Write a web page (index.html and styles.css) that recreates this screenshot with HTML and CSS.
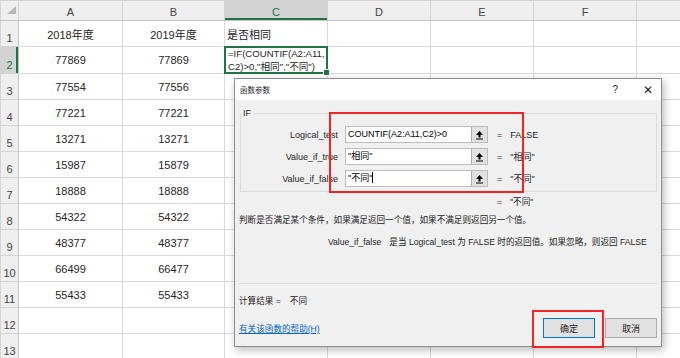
FILE: index.html
```html
<!DOCTYPE html>
<html>
<head>
    <meta charset="utf-8" />
    <title>函数参数</title>
    <link rel="stylesheet" href="styles.css">
</head>
<body>
    <table class="sheet">
        <colgroup>
            <col class="w-rn"><col class="w-a"><col class="w-b"><col class="w-c"><col class="w-d"><col class="w-e"><col class="w-f"><col class="w-g">
        </colgroup>
        <tr class="hd">
            <th class="corner"><span class="tri"></span></th>
            <th>A</th><th>B</th><th class="on">C</th><th>D</th><th>E</th><th>F</th><th></th>
        </tr>
        <tr><th class="rn">1</th><td class="mid">2018年度</td><td class="mid">2019年度</td><td class="txt">是否相同</td><td></td><td></td><td></td><td></td></tr>
        <tr><th class="rn on">2</th><td class="mid">77869</td><td class="mid">77869</td><td class="active"><div class="formula">=IF(COUNTIF(A2:A11,<br>C2)&gt;0,"相同","不同")</div></td><td></td><td></td><td></td><td></td></tr>
        <tr><th class="rn">3</th><td class="mid">77554</td><td class="mid">77556</td><td></td><td></td><td></td><td></td><td></td></tr>
        <tr><th class="rn">4</th><td class="mid">77221</td><td class="mid">77221</td><td></td><td></td><td></td><td></td><td></td></tr>
        <tr><th class="rn">5</th><td class="mid">13271</td><td class="mid">13271</td><td></td><td></td><td></td><td></td><td></td></tr>
        <tr><th class="rn">6</th><td class="mid">15987</td><td class="mid">15879</td><td></td><td></td><td></td><td></td><td></td></tr>
        <tr><th class="rn">7</th><td class="mid">18888</td><td class="mid">18888</td><td></td><td></td><td></td><td></td><td></td></tr>
        <tr><th class="rn">8</th><td class="mid">54322</td><td class="mid">54322</td><td></td><td></td><td></td><td></td><td></td></tr>
        <tr><th class="rn">9</th><td class="mid">48377</td><td class="mid">48377</td><td></td><td></td><td></td><td></td><td></td></tr>
        <tr><th class="rn">10</th><td class="mid">66499</td><td class="mid">66477</td><td></td><td></td><td></td><td></td><td></td></tr>
        <tr><th class="rn">11</th><td class="mid">55433</td><td class="mid">55433</td><td></td><td></td><td></td><td></td><td></td></tr>
        <tr><th class="rn">12</th><td></td><td></td><td></td><td></td><td></td><td></td><td></td></tr>
        <tr><th class="rn">13</th><td></td><td></td><td></td><td></td><td></td><td></td><td></td></tr>
        <tr class="tail"><th class="rn"></th><td></td><td></td><td></td><td></td><td></td><td></td><td></td></tr>
    </table>

    <div class="dlg">
        <div class="dlg-title">
            <span>函数参数</span>
            <span class="dlg-ctl"><span class="help">?</span><span class="close">✕</span></span>
        </div>
        <div class="dlg-body">
            <fieldset class="args">
                <legend>IF</legend>
                <div class="arg">
                    <label>Logical_test</label>
                    <div class="field"><span class="val">COUNTIF(A2:A11,C2)&gt;0</span><span class="pick"><svg width="9" height="10" viewBox="0 0 9 10"><path d="M1 5 L4.5 1 L8 5 Z" fill="#000"/><rect x="3.5" y="4.5" width="2" height="3" fill="#000"/><rect x="1" y="8.5" width="7" height="1" fill="#000"/></svg></span></div>
                    <span class="res"><i>=</i>FALSE</span>
                </div>
                <div class="arg">
                    <label>Value_if_true</label>
                    <div class="field"><span class="val">"相同"</span><span class="pick"><svg width="9" height="10" viewBox="0 0 9 10"><path d="M1 5 L4.5 1 L8 5 Z" fill="#000"/><rect x="3.5" y="4.5" width="2" height="3" fill="#000"/><rect x="1" y="8.5" width="7" height="1" fill="#000"/></svg></span></div>
                    <span class="res"><i>=</i>"相同"</span>
                </div>
                <div class="arg">
                    <label>Value_if_false</label>
                    <div class="field"><span class="val">"不同"<b class="caret"></b></span><span class="pick"><svg width="9" height="10" viewBox="0 0 9 10"><path d="M1 5 L4.5 1 L8 5 Z" fill="#000"/><rect x="3.5" y="4.5" width="2" height="3" fill="#000"/><rect x="1" y="8.5" width="7" height="1" fill="#000"/></svg></span></div>
                    <span class="res"><i>=</i>"不同"</span>
                </div>
            </fieldset>
            <div class="total"><i>=</i>"不同"</div>
            <p class="desc">判断是否满足某个条件，如果满足返回一个值，如果不满足则返回另一个值。</p>
            <p class="desc2"><span class="nm">Value_if_false</span>是当 Logical_test 为 FALSE 时的返回值。如果忽略，则返回 FALSE</p>
            <div class="sep"></div>
            <div class="result">计算结果 =<span class="rv">不同</span></div>
            <div class="foot">
                <a href="javascript:;">有关该函数的帮助(H)</a>
                <div class="btns"><button class="ok">确定</button><button>取消</button></div>
            </div>
        </div>
        <div class="mark mark-args"></div>
        <div class="mark mark-ok"></div>
    </div>
</body>
</html>
```

FILE: styles.css
```css
body {
    margin: 0;
    padding: 0;
    width: 680px;
    height: 358px;
    overflow: hidden;
    position: relative;
    background: #fff;
    font: 11px "Liberation Sans", "Noto Sans CJK SC", sans-serif;
    color: #262626;
}

/* 表格 */
.sheet {
    border-collapse: collapse;
    table-layout: fixed;
    width: 680px;
}

    .sheet .w-rn { width: 18px; }
    .sheet .w-a { width: 104px; }
    .sheet .w-b { width: 102px; }
    .sheet .w-c, .sheet .w-d, .sheet .w-e, .sheet .w-f { width: 103px; }
    .sheet .w-g { width: 44px; }

    .sheet tr {
        height: 26px;
    }

    .sheet tr.hd {
        height: 18px;
    }

    .sheet tr.tail {
        height: 2px;
    }

    .sheet td {
        border: 1px solid #dadada;
        padding: 0 2px;
        white-space: nowrap;
        overflow: hidden;
    }

    .sheet th {
        background: #efefef;
        border: 1px solid #d4d4d4;
        font-weight: normal;
        color: #444;
        padding: 0;
    }

    .sheet .hd th {
        border-bottom-color: #c6c6c6;
        font-size: 11px;
        line-height: 14px;
        padding-top: 2px;
    }

    .sheet th.rn {
        vertical-align: bottom;
        padding-bottom: 1px;
        line-height: 14px;
        border-right-color: #c6c6c6;
        font-size: 11px;
    }

    .sheet .tail th.rn {
        padding: 0;
        line-height: 1px;
    }

    .sheet th.on {
        background: #d3d3d3;
        color: #217346;
    }

    .sheet .hd th.on {
        box-shadow: inset 0 -2px #217346;
    }

    .sheet th.rn.on {
        box-shadow: inset -2px 0 #217346;
    }

    .sheet .corner {
        text-align: right;
        vertical-align: bottom;
        padding: 0 2px 3px 0;
    }

    .sheet .tri {
        display: inline-block;
        width: 0;
        height: 0;
        border-left: 9px solid transparent;
        border-bottom: 8px solid #b9b9b9;
    }

    .sheet .mid {
        text-align: center;
    }

    .sheet .txt {
        padding-left: 2px;
    }

    .sheet .active {
        position: relative;
        overflow: visible;
    }

        .sheet .active::after {
            content: "";
            position: absolute;
            left: -1px;
            top: -1px;
            right: -1px;
            bottom: -1px;
            border: 2px solid #217346;
        }

        .sheet .active::before {
            content: "";
            position: absolute;
            right: -3px;
            bottom: -3px;
            width: 5px;
            height: 5px;
            background: #217346;
            border: 1px solid #fff;
            z-index: 1;
        }

.formula {
    font-size: 9.6px;
    line-height: 13px;
    padding-left: 1px;
}

/* 对话框 */
.dlg {
    position: absolute;
    left: 234px;
    top: 78px;
    width: 428px;
    height: 269px;
    box-sizing: border-box;
    border: 1px solid #8e8e8e;
    background: #f0f0f0;
    box-shadow: 2px 3px 8px rgba(0,0,0,0.28);
    font-size: 8.6px;
    color: #1e1e1e;
}

.dlg-title {
    height: 21px;
    background: #fff;
    display: flex;
    align-items: center;
    justify-content: space-between;
    padding: 0 8px 0 5px;
    font-size: 7.5px;
}

.dlg-ctl {
    display: flex;
    align-items: center;
    gap: 25px;
}

    .dlg-ctl .help {
        font-size: 10px;
    }

    .dlg-ctl .close {
        font-size: 12px;
        color: #222;
    }

.dlg-body {
    padding: 0 4px 0 4px;
}

.args {
    margin: 7px 0 0 1px;
    padding: 7px 0 4px 0;
    border: 1px solid #dcdcdc;
    min-width: 0;
}

    .args legend {
        padding: 0 2px;
        line-height: 12px;
        font-size: 9px;
    }

.arg {
    display: flex;
    align-items: center;
    height: 17px;
    margin-bottom: 5px;
    font-size: 9px;
}

    .arg:last-child {
        margin-bottom: 0;
    }

    .arg label {
        width: 97px;
        text-align: right;
    }

.field {
    margin-left: 7px;
    width: 143px;
    height: 17px;
    box-sizing: border-box;
    display: flex;
    background: #fff;
    border: 1px solid #bcbcbc;
}

    .field .val {
        flex: 1;
        padding-left: 2px;
        line-height: 15px;
        color: #000;
        white-space: nowrap;
        overflow: hidden;
    }

    .field .pick {
        width: 15px;
        background: #e1e1e1;
        border-left: 1px solid #adadad;
        display: flex;
        align-items: center;
        justify-content: center;
    }

.caret {
    display: inline-block;
    width: 1px;
    height: 11px;
    background: #000;
    vertical-align: -2px;
}

.res {
    margin-left: 9px;
}

.res i, .total i {
    font-style: normal;
    margin-right: 8px;
}

.total {
    margin-top: 4px;
    padding-left: 258px;
    line-height: 12px;
}

.desc {
    margin: 6px 0 0;
    line-height: 12px;
    white-space: nowrap;
}

.desc2 {
    margin: 10px 0 0;
    padding-left: 89px;
    line-height: 12px;
    white-space: nowrap;
}

    .desc2 .nm {
        margin-right: 8px;
    }

.sep {
    margin-top: 35px;
    height: 1px;
    background: #dcdcdc;
}

.result {
    margin-top: 11px;
    line-height: 12px;
}

    .result .rv {
        margin-left: 9px;
    }

.foot {
    margin-top: 11px;
    display: flex;
    align-items: center;
    justify-content: space-between;
}

    .foot a {
        color: #0066cc;
        text-decoration: underline;
    }

.btns {
    display: flex;
    gap: 10px;
}

    .btns button {
        width: 52px;
        height: 20px;
        padding: 0;
        background: #e1e1e1;
        border: 1px solid #adadad;
        font: 9px "Liberation Sans", "Noto Sans CJK SC", sans-serif;
        color: #1e1e1e;
    }

        .btns button.ok {
            border-color: #0078d7;
        }

/* 红色标注框 */
.mark {
    position: absolute;
    border: 2px solid #f52323;
    box-sizing: border-box;
}

.mark-args {
    left: 94px;
    top: 33px;
    width: 195px;
    height: 81px;
}

.mark-ok {
    left: 297px;
    top: 231px;
    width: 72px;
    height: 38px;
}
```
